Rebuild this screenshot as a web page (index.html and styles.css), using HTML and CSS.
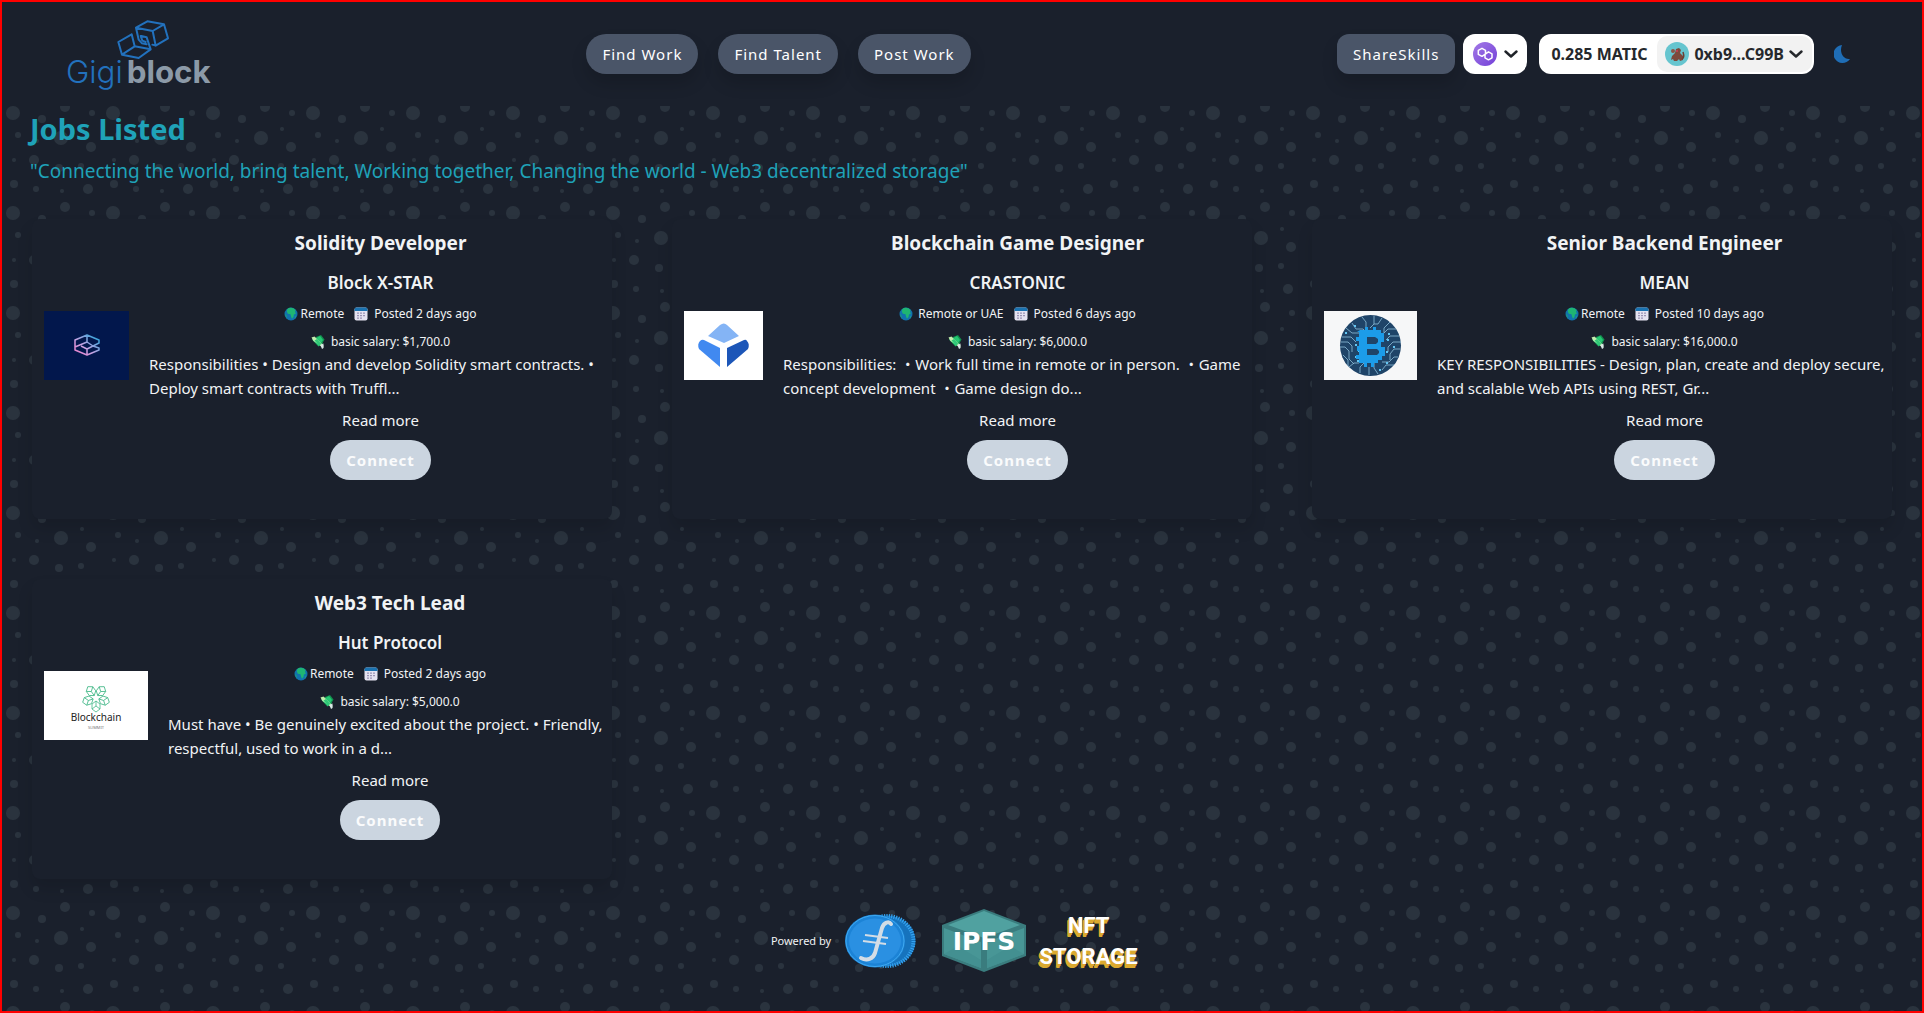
FILE: index.html
```html
<!DOCTYPE html>
<html lang="en">
<head>
<meta charset="utf-8">
<meta name="viewport" content="width=device-width, initial-scale=1">
<title>Gigiblock - Jobs Listed</title>
<link rel="stylesheet" href="styles.css">
</head>
<body>

<svg class="sprite" aria-hidden="true">
  <symbol id="globe" viewBox="0 0 14 14">
    <circle cx="7" cy="7" r="6.500" fill="#1173ad"/>
    <path d="M3.2 2.2C5 .6 7.500 .4 9.800 1.400L11.500 3 11 5 12 6.500 10 7.500 9.500 10 8 11.800 7 9.500 6.500 7.300 3.800 6.800 2.800 4.500z" fill="#1fb573"/>
    <path d="M1 6.500L2.500 8.500 3 11 1.800 10z" fill="#1a9a7c"/>
    <path d="M10.500 10l1.500-1-.5 2z" fill="#1fb573"/>
  </symbol>
  <symbol id="calendar" viewBox="0 0 14 14">
    <rect x=".5" y=".5" width="13" height="13" rx="2" fill="#e4e2f0"/>
    <path d="M.5 4V2.500a2 2 0 0 1 2-2h9a2 2 0 0 1 2 2V4z" fill="#1a72b0"/>
    <path d="M3 6.200h2M6 6.200h2M9 6.200h2M3 8.700h2M6 8.700h2M9 8.700h2M3 11.200h2M6 11.200h2" stroke="#9a93b4" stroke-width="1.300"/>
  </symbol>
  <symbol id="money" viewBox="0 0 14 14">
    <path d="M1 4.500L6 2l6 6-4.500 3.500z" fill="#21c06b"/>
    <path d="M5 2l5-2 3.500 4.500L11 9z" fill="#12924f"/>
    <path d="M5.500 3L9 1l3 4-2 3z" fill="#25c873"/>
    <path d="M.5 2.500L3.500 1.500l9 9-.5 3L8 9.500 2.500 6z" fill="#c4ecae"/>
    <path d="M3.500 5.500L6 4l4.500 5L8 10.500z" fill="#2fc878"/>
    <path d="M9.500 10l3-1.500V13l-1.500 1z" fill="#d9e6e8"/>
  </symbol>
  <symbol id="chevron" viewBox="0 0 14 8">
    <path d="M1.500 1.500L7 6.500l5.500-5" fill="none" stroke="currentColor" stroke-width="2.400" stroke-linecap="round" stroke-linejoin="round"/>
  </symbol>
</svg>

<div class="page">
  <header class="header">
    <a class="brand" href="#" aria-label="Gigiblock home">
      <svg width="160" height="80" viewBox="0 0 480 240">
        <g fill="none" stroke="#2271bd" stroke-width="6" stroke-linejoin="round" stroke-linecap="round">
          <path d="M228 41L262 22l50 9 12 42-37 22-10-3M228 41l50 10 34-20M278 51l9 44M228 41l8 36 10 11 14 3"/>
          <path d="M215 61L175 84l11 38 50 10 36-26-12-36-16-4M215 61l9 36 48 9M224 97l-38 25M242 66l5 14 10 4"/>
        </g>
        <text class="brand-text" y="206"><tspan class="brand-thin" x="18">Gigi</tspan><tspan class="brand-bold" x="200">block</tspan></text>
      </svg>
    </a>

    <nav class="nav">
      <button class="pill" type="button">Find Work</button>
      <button class="pill" type="button">Find Talent</button>
      <button class="pill" type="button">Post Work</button>
    </nav>

    <div class="account">
      <button class="pill pill-square" type="button">ShareSkills</button>
      <button class="chain" type="button" aria-label="Polygon network">
        <svg width="24" height="24" viewBox="0 0 24 24">
          <defs><linearGradient id="poly" x1="0" y1="0" x2="1" y2="1"><stop offset="0" stop-color="#a379e6"/><stop offset="1" stop-color="#7340d8"/></linearGradient></defs>
          <circle cx="12" cy="12" r="12" fill="url(#poly)"/>
          <path d="M12.500 11.500V8.300L9 6.300 5.300 8.300v4L9 14.300l6.500-4.500 3.500 2v4l-3.500 2-3.500-2v-3.500" fill="none" stroke="#fff" stroke-width="1.500" stroke-linejoin="round"/>
        </svg>
        <svg class="chevron" width="14" height="8"><use href="#chevron"/></svg>
      </button>
      <div class="wallet">
        <span>0.285 MATIC</span>
        <button class="address" type="button">
          <svg width="24" height="24" viewBox="0 0 24 24">
            <circle cx="12" cy="12" r="12" fill="#66c5cf"/>
            <path d="M6 18l1-4 3-3 1-4 3-1 2 2-1 3 3 3v4l-3 1-1-2-2 2H9l-1-2z" fill="#7d4a3c"/>
            <path d="M17 17c2-1 2-4 1-7" fill="none" stroke="#6b4035" stroke-width="1.500"/>
            <circle cx="8" cy="9" r="2" fill="#8c5546"/><circle cx="12" cy="9" r="1" fill="#d33c55"/>
          </svg>
          0xb9...C99B
          <svg class="chevron" width="14" height="8"><use href="#chevron"/></svg>
        </button>
      </div>
      <button class="theme" type="button" aria-label="Toggle dark mode">
        <svg width="16" height="18" viewBox="0 0 16 18"><path d="M8 0A9 9 0 1 0 16 14C9 15 5 7 8 0z" fill="#1f6db5"/></svg>
      </button>
    </div>
  </header>

  <main class="main">
    <h1 class="title">Jobs Listed</h1>
    <p class="tagline">"Connecting the world, bring talent, Working together, Changing the world - Web3 decentralized storage"</p>

    <section class="jobs">
      <article class="card">
        <svg class="logo" width="85" height="69" viewBox="0 0 85 69">
          <defs><linearGradient id="bx" x1="0" y1="1" x2="1" y2="0"><stop offset="0" stop-color="#f07cc8"/><stop offset=".4" stop-color="#c9a2e2"/><stop offset="1" stop-color="#16a5d8"/></linearGradient></defs>
          <rect width="85" height="69" fill="#02174c"/>
          <path d="M43 24l12 5v3l-6 3 6 2v2l-12 5-12-5V29zM43 24v7l-12 5M43 31l6 4-6 3-6-3M43 38v6M49 35l-6 3" fill="none" stroke="url(#bx)" stroke-width="1.500" stroke-linejoin="round"/>
        </svg>
        <div class="info">
          <h2 class="role">Solidity Developer</h2>
          <h3 class="company">Block X-STAR</h3>
          <p class="meta"><svg class="icon"><use href="#globe"/></svg><span class="place">Remote</span><svg class="icon"><use href="#calendar"/></svg><span class="after">Posted 2 days ago</span></p>
          <p class="meta"><svg class="icon"><use href="#money"/></svg><span class="after">basic salary: $1,700.0</span></p>
          <p class="summary">Responsibilities • Design and develop Solidity smart contracts. • Deploy smart contracts with Truffl...</p>
          <a class="more" href="#">Read more</a>
          <button class="connect" type="button">Connect</button>
        </div>
      </article>

      <article class="card">
        <svg class="logo" width="79" height="69" viewBox="0 0 79 69">
          <rect width="79" height="69" fill="#fff"/>
          <path d="M24 25l12-11q4-3 7 0l12 11-15 7z" fill="#84b4f5"/>
          <path d="M20 29l16 8v19L15 38q-2-5 1-8 2-2 4-1z" fill="#4189f0"/>
          <path d="M60 29l-17 8v19l21-18q2-5-1-8-1-2-3-1z" fill="#1c56b8"/>
        </svg>
        <div class="info">
          <h2 class="role">Blockchain Game Designer</h2>
          <h3 class="company">CRASTONIC</h3>
          <p class="meta"><svg class="icon"><use href="#globe"/></svg><span class="place">&nbsp;Remote or UAE</span><svg class="icon"><use href="#calendar"/></svg><span class="after">Posted 6 days ago</span></p>
          <p class="meta"><svg class="icon"><use href="#money"/></svg><span class="after">basic salary: $6,000.0</span></p>
          <p class="summary">Responsibilities: ・Work full time in remote or in person. ・Game concept development ・Game design do...</p>
          <a class="more" href="#">Read more</a>
          <button class="connect" type="button">Connect</button>
        </div>
      </article>

      <article class="card">
        <svg class="logo" width="93" height="69" viewBox="0 0 93 69">
          <rect width="93" height="69" fill="#f6f7f8"/>
          <circle cx="46.500" cy="34.500" r="30.500" fill="#1f4468"/>
          <g fill="none" stroke="#8fc0dc" stroke-width=".8">
            <path d="M18 26h9l5 5M17 31h7l4 4v6M16 36h5l4 4v8l5 5M19 44l5 5v6M22 17l6 5h7M28 12l4 6h7l5 5M38 6l4 5v5M50 5v8l-4 4M58 7l-4 6h-4M66 11l-6 6v5M72 18h-8l-5 5M75 25h-9l-4 4M77 31h-8l-5 5v5M76 38h-6l-4 5v6M74 46h-4l-5 5h-7M70 54h-8l-4 5M36 62v-6l4-4M45 64v-8M54 63l-4-6v-5M25 56l5-4h5"/>
          </g>
          <g fill="#63c6f3"><path d="M21 21h2v2h-2zM30 14h2v2h-2zM64 22h2v2h-2zM69 35h2v2h-2zM62 51h2v2h-2zM33 49h2v2h-2zM55 58h2v2h-2zM34 27h2v2h-2zM31 33h2v2h-2zM34 39h2v2h-2zM31 45h2v2h-2zM63 28h2v2h-2zM62 40h2v2h-2z"/></g>
          <path d="M36 19h5v-3h3v3h5v-3h3v3h5v3h3v9h-3v5h4v9h-3v4h-4v3h-4v4h-3v-4h-4v4h-3v-4h-5v-4h-3v-4h3v-4h-2v-5h2v-5h-3v-4h3v-5h-2z" fill="#1c9ce9"/>
          <path d="M43 26h8l3 2v3l-2 2h-9zM43 38h10l2 2v2l-2 2H43z" fill="#1f4468"/>
        </svg>
        <div class="info">
          <h2 class="role">Senior Backend Engineer</h2>
          <h3 class="company">MEAN</h3>
          <p class="meta"><svg class="icon"><use href="#globe"/></svg><span class="place">Remote</span><svg class="icon"><use href="#calendar"/></svg><span class="after">Posted 10 days ago</span></p>
          <p class="meta"><svg class="icon"><use href="#money"/></svg><span class="after">basic salary: $16,000.0</span></p>
          <p class="summary">KEY RESPONSIBILITIES - Design, plan, create and deploy secure, and scalable Web APIs using REST, Gr...</p>
          <a class="more" href="#">Read more</a>
          <button class="connect" type="button">Connect</button>
        </div>
      </article>

      <article class="card">
        <svg class="logo" width="104" height="69" viewBox="0 0 104 69">
          <defs>
            <g id="petal"><path d="M0-3l-4-3v-5l4-3 4 3v5zM0-3v-5M-4-11l4 3 4-3" fill="none" stroke="#43b888" stroke-width=".8"/></g>
          </defs>
          <rect width="104" height="69" fill="#fff"/>
          <g transform="translate(52 27)">
            <use href="#petal" transform="rotate(36)"/><use href="#petal" transform="rotate(108)"/><use href="#petal" transform="rotate(180)"/><use href="#petal" transform="rotate(252)"/><use href="#petal" transform="rotate(324)"/>
          </g>
          <text class="hut-name" x="52" y="50" text-anchor="middle">Blockchain</text>
          <text class="hut-sub" x="52" y="58" text-anchor="middle">SUMMIT</text>
        </svg>
        <div class="info">
          <h2 class="role">Web3 Tech Lead</h2>
          <h3 class="company">Hut Protocol</h3>
          <p class="meta"><svg class="icon"><use href="#globe"/></svg><span class="place">Remote</span><svg class="icon"><use href="#calendar"/></svg><span class="after">Posted 2 days ago</span></p>
          <p class="meta"><svg class="icon"><use href="#money"/></svg><span class="after">basic salary: $5,000.0</span></p>
          <p class="summary">Must have • Be genuinely excited about the project. • Friendly, respectful, used to work in a d...</p>
          <a class="more" href="#">Read more</a>
          <button class="connect" type="button">Connect</button>
        </div>
      </article>
    </section>
  </main>

  <footer class="footer">
    <span>Powered by</span>
    <svg class="coin" width="71" height="54" viewBox="0 0 71 54" role="img" aria-label="Filecoin">
      <ellipse cx="42" cy="27" rx="28.500" ry="25.500" fill="#1673bd"/>
      <ellipse cx="42" cy="27" rx="26.500" ry="25" fill="none" stroke="#35a3ef" stroke-width="4" stroke-dasharray="1.200 1.200"/>
      <ellipse cx="30" cy="27" rx="30" ry="26.500" fill="#1c83d6"/>
      <ellipse cx="30" cy="27" rx="29" ry="25.500" fill="none" stroke="#3fa9f0"/>
      <ellipse cx="30" cy="27" rx="26" ry="22.500" fill="#2a90e2"/>
      <path d="M46 10c-2-3-7-2-9 4l-7 25c-2 6-8 8-14 5" fill="none" stroke="#d3dde6" stroke-width="4" stroke-linecap="round"/>
      <path d="M20 21l23 3M18 27l23 3" stroke="#d3dde6" stroke-width="2"/>
    </svg>
    <svg class="ipfs" width="84" height="63" viewBox="0 0 84 63" role="img" aria-label="IPFS">
      <path d="M42 0l42 16v31L42 63 0 47V16z" fill="#3a7c7e"/>
      <path d="M42 2l36 14-36 13L6 16z" fill="#50a1a0"/>
      <path d="M2 19l37 14v26L2 45zM82 19L45 33v26l37-14z" fill="#489696"/>
      <path d="M2 45l14-8 23 14v8zM82 45l-14-8-23 14v8z" fill="#439091"/>
      <text class="ipfs-name" x="42" y="41" text-anchor="middle">IPFS</text>
    </svg>
    <div class="nft"><span>NFT</span><span>STORAGE</span></div>
  </footer>
</div>
</body>
</html>
```
FILE: styles.css
```css
*, *::before, *::after { box-sizing: border-box; }

body {
  margin: 0;
  background: #1a202c;
  color: #f1f3f5;
  font: 15px/24px "Noto Sans", "Noto Sans CJK JP", sans-serif;
}

h1, h2, h3, p { margin: 0; }

button {
  border: 0;
  padding: 0;
  font: inherit;
  color: inherit;
  cursor: pointer;
}

svg { display: block; flex: none; }

.sprite { display: none; }

.page {
  min-height: 100vh;
  border: 2px solid #f00;
  background: #1a202c url("data:image/svg+xml,%3Csvg xmlns='http://www.w3.org/2000/svg' width='100' height='100'%3E%3Cg fill='%232a333e'%3E%3Ccircle cx='11' cy='11' r='7'/%3E%3Ccircle cx='59' cy='36' r='7'/%3E%3Ccircle cx='89' cy='45' r='5'/%3E%3Ccircle cx='57' cy='66' r='4'/%3E%3Ccircle cx='79' cy='64' r='3'/%3E%3Ccircle cx='32' cy='58' r='5'/%3E%3Ccircle cx='12' cy='58' r='2'/%3E%3Ccircle cx='60' cy='89' r='2'/%3E%3Ccircle cx='86' cy='87' r='5'/%3E%3Ccircle cx='12' cy='82' r='4'/%3E%3Ccircle cx='34' cy='87' r='3'/%3E%3Ccircle cx='63' cy='5' r='5'/%3E%3Ccircle cx='90' cy='11' r='3'/%3E%3Ccircle cx='40' cy='17' r='4'/%3E%3Ccircle cx='80' cy='27' r='2'/%3E%3Ccircle cx='16' cy='33' r='3'/%3E%3Ccircle cx='35' cy='39' r='2'/%3E%3C/g%3E%3C/svg%3E");
}

/* Header */

.header {
  display: flex;
  align-items: center;
  justify-content: space-between;
  min-height: 104px;
  padding: 12px 72px 12px 58px;
  background: #1a202c;
}

.brand-text { font-family: Inter, sans-serif; font-size: 94px; }
.brand-thin { font-weight: 300; fill: #2271bd; }
.brand-bold { font-weight: 700; fill: #8c9aa8; }

.nav { display: flex; gap: 20px; }

.pill {
  height: 40px;
  padding: 0 16px;
  border-radius: 20px;
  background: #4a5568;
  color: #fff;
  letter-spacing: 1px;
  box-shadow: 0 10px 16px rgba(0, 0, 0, .15);
}

.pill-square { border-radius: 12px; margin-right: 8px; }

.account { display: flex; align-items: center; }

.chain {
  display: flex;
  align-items: center;
  gap: 7px;
  height: 40px;
  padding: 0 9px 0 10px;
  margin-right: 12px;
  border-radius: 12px;
  background: #fff;
  color: #1f2329;
}

.wallet {
  display: flex;
  align-items: center;
  gap: 10px;
  height: 40px;
  padding: 2px 2px 2px 12px;
  margin-right: 20px;
  border-radius: 12px;
  background: #fff;
  color: #25282c;
  font-size: 16px;
  font-weight: 700;
}

.address {
  display: flex;
  align-items: center;
  gap: 5px;
  height: 36px;
  padding: 0 9px 0 8px;
  border-radius: 10px;
  background: #f2f2f2;
}

.theme { background: none; }

/* Job list */

.main { padding: 7px 28px 0; }

.title {
  color: #1fa2b8;
  font-size: 29px;
  line-height: 32px;
}

.tagline {
  margin-top: 12px;
  color: #1fa2b8;
  font-size: 19px;
  line-height: 28px;
}

.jobs {
  display: grid;
  grid-template-columns: repeat(3, 1fr);
  gap: 60px;
  padding: 34px 2px 0;
}

.card {
  display: flex;
  align-items: center;
  gap: 20px;
  min-height: 300px;
  padding: 0 0 39px 12px;
  border-radius: 8px;
  background: #1a202c;
  box-shadow: 0 10px 16px rgba(0, 0, 0, .12);
}

.logo { margin-bottom: 8px; }

.info {
  display: flex;
  flex: 1;
  flex-direction: column;
  align-items: center;
  align-self: flex-start;
  padding-top: 12px;
}

.role { font-size: 19px; line-height: 24px; }

.company {
  margin-top: 16px;
  font-size: 17px;
  font-weight: 600;
  line-height: 24px;
}

.meta {
  display: flex;
  align-items: center;
  margin-top: 8px;
  font-size: 12px;
  line-height: 20px;
}

.company + .meta { margin-top: 9px; }

.icon { width: 14px; height: 14px; }

.place { margin: 0 10px 0 2px; }
.after { margin-left: 6px; }

.summary { align-self: stretch; }

.more {
  margin-top: 8px;
  color: inherit;
  text-decoration: none;
}

.connect {
  height: 40px;
  margin-top: 8px;
  padding: 0 16px;
  border-radius: 20px;
  background: #cbd5e0;
  color: #fafbfc;
  font-weight: 700;
  letter-spacing: 1px;
}

.hut-name { font: 10px "Noto Sans", sans-serif; fill: #222; }
.hut-sub { font: 4px "Noto Sans", sans-serif; fill: #777; }

/* Footer */

.footer {
  display: flex;
  align-items: center;
  justify-content: center;
  padding: 30px 16px 38px 0;
  font-size: 11px;
}

.coin { margin: 0 26px 0 14px; }

.ipfs-name { font: 700 25px "DejaVu Sans", sans-serif; fill: #fff; }

.nft {
  display: flex;
  flex-direction: column;
  align-items: center;
  width: 97px;
  margin-left: 14px;
  color: #fff;
  font: 700 22px/31px Roboto, sans-serif;
  text-shadow: -1px 1px #dba92f, -1px 2px #dba92f, -2px 3px #dba92f, -2px 4px #dba92f;
}
```
